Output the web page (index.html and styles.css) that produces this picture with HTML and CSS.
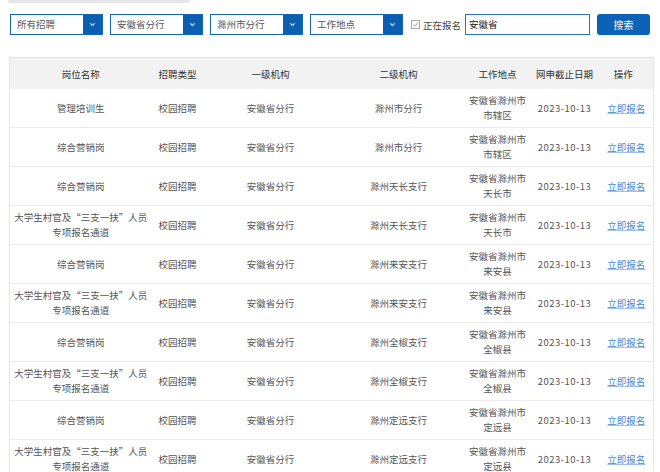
FILE: index.html
```html
<!DOCTYPE html>
<html lang="zh-CN">
<head>
<meta charset="utf-8">
<link rel="stylesheet" href="styles.css">
</head>
<body>
<div class="top-edge"></div>
<div class="toolbar">
  <div class="select w93"><span class="sel-text">所有招聘</span><span class="sel-btn"><svg viewBox="0 0 8 8" width="7" height="7"><path d="M1.5 2.8 L4 5.2 L6.5 2.8" fill="none" stroke="#fff" stroke-width="1.2"/></svg></span></div>
  <div class="select w93"><span class="sel-text">安徽省分行</span><span class="sel-btn"><svg viewBox="0 0 8 8" width="7" height="7"><path d="M1.5 2.8 L4 5.2 L6.5 2.8" fill="none" stroke="#fff" stroke-width="1.2"/></svg></span></div>
  <div class="select w93"><span class="sel-text">滁州市分行</span><span class="sel-btn"><svg viewBox="0 0 8 8" width="7" height="7"><path d="M1.5 2.8 L4 5.2 L6.5 2.8" fill="none" stroke="#fff" stroke-width="1.2"/></svg></span></div>
  <div class="select w93"><span class="sel-text">工作地点</span><span class="sel-btn"><svg viewBox="0 0 8 8" width="7" height="7"><path d="M1.5 2.8 L4 5.2 L6.5 2.8" fill="none" stroke="#fff" stroke-width="1.2"/></svg></span></div>
  <label class="check"><span class="box"><svg viewBox="0 0 9 9" width="9" height="9"><rect x="0.5" y="0.5" width="8" height="8" fill="#fff" stroke="#aaa"/><path d="M2 4.6 L3.8 6.3 L7 2.6" fill="none" stroke="#999" stroke-width="0.9"/></svg></span>正在报名</label>
  <div class="input">安徽省</div>
  <button class="search">搜索</button>
</div>
<table class="grid">
  <colgroup>
    <col class="c1"><col class="c2"><col class="c3"><col class="c4"><col class="c5"><col class="c6"><col class="c7">
  </colgroup>
  <thead>
    <tr><th>岗位名称</th><th>招聘类型</th><th>一级机构</th><th>二级机构</th><th>工作地点</th><th>网申截止日期</th><th>操作</th></tr>
  </thead>
  <tbody>
    <tr><td>管理培训生</td><td>校园招聘</td><td>安徽省分行</td><td>滁州市分行</td><td>安徽省滁州市<br>市辖区</td><td class="date">2023-10-13</td><td class="op"><a class="link">立即报名</a></td></tr>
    <tr><td>综合营销岗</td><td>校园招聘</td><td>安徽省分行</td><td>滁州市分行</td><td>安徽省滁州市<br>市辖区</td><td class="date">2023-10-13</td><td class="op"><a class="link">立即报名</a></td></tr>
    <tr><td>综合营销岗</td><td>校园招聘</td><td>安徽省分行</td><td>滁州天长支行</td><td>安徽省滁州市<br>天长市</td><td class="date">2023-10-13</td><td class="op"><a class="link">立即报名</a></td></tr>
    <tr><td>大学生村官及“三支一扶”人员<br>专项报名通道</td><td>校园招聘</td><td>安徽省分行</td><td>滁州天长支行</td><td>安徽省滁州市<br>天长市</td><td class="date">2023-10-13</td><td class="op"><a class="link">立即报名</a></td></tr>
    <tr><td>综合营销岗</td><td>校园招聘</td><td>安徽省分行</td><td>滁州来安支行</td><td>安徽省滁州市<br>来安县</td><td class="date">2023-10-13</td><td class="op"><a class="link">立即报名</a></td></tr>
    <tr><td>大学生村官及“三支一扶”人员<br>专项报名通道</td><td>校园招聘</td><td>安徽省分行</td><td>滁州来安支行</td><td>安徽省滁州市<br>来安县</td><td class="date">2023-10-13</td><td class="op"><a class="link">立即报名</a></td></tr>
    <tr><td>综合营销岗</td><td>校园招聘</td><td>安徽省分行</td><td>滁州全椒支行</td><td>安徽省滁州市<br>全椒县</td><td class="date">2023-10-13</td><td class="op"><a class="link">立即报名</a></td></tr>
    <tr><td>大学生村官及“三支一扶”人员<br>专项报名通道</td><td>校园招聘</td><td>安徽省分行</td><td>滁州全椒支行</td><td>安徽省滁州市<br>全椒县</td><td class="date">2023-10-13</td><td class="op"><a class="link">立即报名</a></td></tr>
    <tr><td>综合营销岗</td><td>校园招聘</td><td>安徽省分行</td><td>滁州定远支行</td><td>安徽省滁州市<br>定远县</td><td class="date">2023-10-13</td><td class="op"><a class="link">立即报名</a></td></tr>
    <tr><td>大学生村官及“三支一扶”人员<br>专项报名通道</td><td>校园招聘</td><td>安徽省分行</td><td>滁州定远支行</td><td>安徽省滁州市<br>定远县</td><td class="date">2023-10-13</td><td class="op"><a class="link">立即报名</a></td></tr>
  </tbody>
</table>
</body>
</html>
```
FILE: styles.css
```css
html, body {
  margin: 0;
  padding: 0;
  background: #fff;
}
body {
  font-family: "Noto Sans CJK SC", "Noto Sans", sans-serif;
  font-size: 9.5px;
  color: #555;
  overflow: hidden;
}
.top-edge {
  width: 182px;
  height: 3px;
  margin-left: 8px;
  background: #e6e6e6;
  border-radius: 0 0 5px 5px;
}
.toolbar {
  display: flex;
  align-items: center;
  margin-top: 11px;
  padding-left: 10px;
  height: 21px;
}
.select {
  display: flex;
  height: 21px;
  box-sizing: border-box;
  border: 1px solid #1566b6;
  background: #fff;
  margin-right: 7px;
}
.w93 { width: 93px; }
.sel-text {
  flex: 1;
  padding-left: 6px;
  line-height: 19px;
  color: #555;
  font-size: 9.5px;
}
.sel-btn {
  width: 19px;
  background: #0c5fb0;
  display: flex;
  align-items: center;
  justify-content: center;
}
.check {
  display: flex;
  align-items: center;
  margin-left: 1px;
  color: #444;
  font-size: 9.5px;
}
.box {
  display: inline-flex;
  margin-right: 3px;
}
.input {
  margin-left: 4px;
  width: 125px;
  height: 21px;
  box-sizing: border-box;
  border: 1px solid #2a72bd;
  padding-left: 3px;
  line-height: 19px;
  color: #222;
  font-size: 9.5px;
}
.search {
  margin-left: 7px;
  width: 53px;
  height: 21px;
  border: none;
  border-radius: 3px;
  background: #0b62b6;
  color: #fff;
  font-family: inherit;
  font-size: 10px;
  padding: 0;
}
.grid {
  margin-top: 22px;
  margin-left: 9px;
  width: 644px;
  table-layout: fixed;
  border-collapse: collapse;
  border-left: 1px solid #e6e6e6;
  border-right: 1px solid #e6e6e6;
}
.c1 { width: 142px; }
.c2 { width: 52px; }
.c3 { width: 134px; }
.c4 { width: 122px; }
.c5 { width: 76px; }
.c6 { width: 58px; }
.c7 { width: 60px; }
.grid th {
  height: 31px;
  padding: 0;
  background: #f2f2f2;
  border-top: 1px solid #e2e2e2;
  color: #333;
  font-weight: normal;
  font-size: 9.5px;
  text-align: center;
}
.grid td {
  height: 38px;
  padding: 0 2px;
  border-bottom: 1px solid #ececec;
  text-align: center;
  line-height: 15px;
  color: #555;
  font-size: 9.5px;
}
.grid td.date {
  padding: 0;
  letter-spacing: 0.45px;
}
.grid td.op {
  padding-left: 6px;
  padding-right: 0;
}
.link {
  color: #3f8ad6;
  text-decoration: underline;
  text-decoration-color: #9cc2ea;
}
```
